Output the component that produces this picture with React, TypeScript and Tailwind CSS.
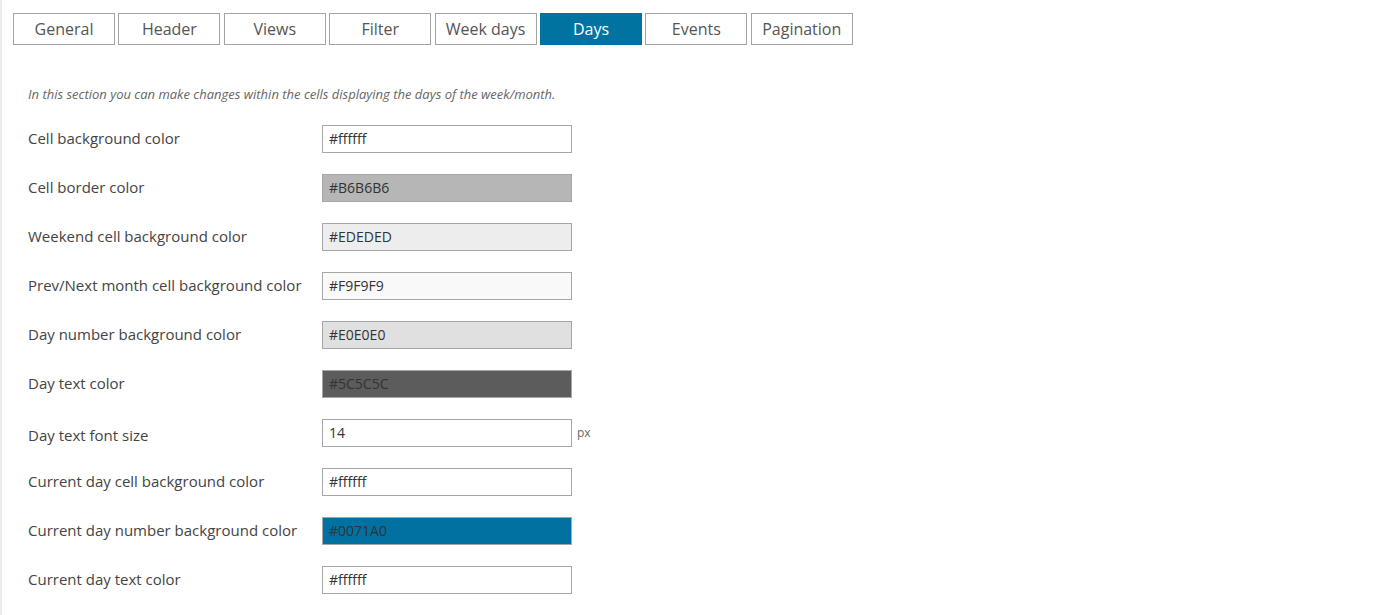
const tabs = ['General', 'Header', 'Views', 'Filter', 'Week days', 'Days', 'Events', 'Pagination'];

type Field = {
  label: string;
  value: string;
  bg: string;
  unit?: string;
};

const fields: Field[] = [
  { label: 'Cell background color', value: '#ffffff', bg: 'bg-white' },
  { label: 'Cell border color', value: '#B6B6B6', bg: 'bg-[#B6B6B6]' },
  { label: 'Weekend cell background color', value: '#EDEDED', bg: 'bg-[#EDEDED]' },
  { label: 'Prev/Next month cell background color', value: '#F9F9F9', bg: 'bg-[#F9F9F9]' },
  { label: 'Day number background color', value: '#E0E0E0', bg: 'bg-[#E0E0E0]' },
  { label: 'Day text color', value: '#5C5C5C', bg: 'bg-[#5C5C5C]' },
  { label: 'Day text font size', value: '14', bg: 'bg-white', unit: 'px' },
  { label: 'Current day cell background color', value: '#ffffff', bg: 'bg-white' },
  { label: 'Current day number background color', value: '#0071A0', bg: 'bg-[#0071A0]' },
  { label: 'Current day text color', value: '#ffffff', bg: 'bg-white' },
];

export default function App() {
  return (
    <div className="min-h-screen border-l-2 border-[#ececec] bg-white pl-[11px] pt-[13px] font-['Open_Sans',sans-serif]">
      {/* tab strip */}
      <div className="flex gap-[3.4px]">
        {tabs.map((t) =>
          t === 'Days' ? (
            <div
              key={t}
              className="flex h-[32px] w-[102px] items-center justify-center border border-[#0073a0] bg-[#0073a0] text-[16px] text-white"
            >
              {t}
            </div>
          ) : (
            <div
              key={t}
              className="flex h-[32px] w-[102px] items-center justify-center border border-[#a3a3a3] bg-white text-[16px] text-[#555]"
            >
              {t}
            </div>
          )
        )}
      </div>

      <div className="pl-[15px] pt-[40px]">
        <p className="mb-[10px] text-[13px] leading-[19px] italic text-[#666]">
          In this section you can make changes within the cells displaying the days of the week/month.
        </p>

        {fields.map((f) => (
          <div key={f.label} className="flex h-[49px] items-center">
            <label className={`w-[294px] text-[15px] text-[#444] ${f.unit ? 'pt-[6px]' : ''}`}>
              {f.label}
            </label>
            <input
              readOnly
              value={f.value}
              className={`h-[28px] w-[250px] border border-[#a6a6a6] px-[6px] text-[14px] text-[#333] outline-none ${f.bg}`}
            />
            {f.unit && <span className="ml-[5px] text-[12px] text-[#666]">{f.unit}</span>}
          </div>
        ))}
      </div>
    </div>
  );
}
